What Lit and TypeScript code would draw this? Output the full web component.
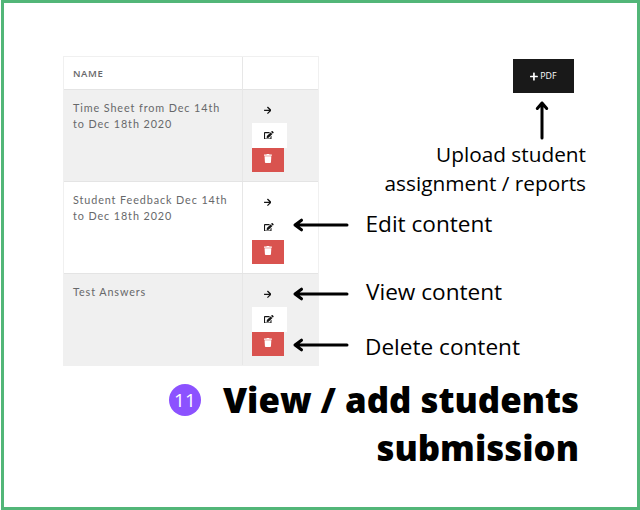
import { LitElement, html, css, svg } from "lit";
import { customElement, property } from "lit/decorators.js";

const ICONS = {
  arrow: {
    w: 448,
    d: "M190.5 66.9l22.2-22.2c9.4-9.4 24.6-9.4 33.9 0L441 239c9.4 9.4 9.4 24.6 0 33.9L246.6 467.3c-9.4 9.4-24.6 9.4-33.9 0l-22.2-22.2c-9.5-9.5-9.3-25 .4-34.3L311.4 296H24c-13.3 0-24-10.7-24-24v-32c0-13.3 10.7-24 24-24h287.4L190.9 101.2c-9.8-9.3-10-24.8-.4-34.3z",
  },
  edit: {
    w: 576,
    d: "M402.6 83.2l90.2 90.2c3.8 3.8 3.8 10 0 13.8L274.4 405.6l-92.8 10.3c-12.4 1.4-22.9-9.1-21.5-21.5l10.3-92.8L388.8 83.2c3.8-3.8 10-3.8 13.8 0zm162-22.9l-48.8-48.8c-15.2-15.2-39.9-15.2-55.2 0l-35.4 35.4c-3.8 3.8-3.8 10 0 13.8l90.2 90.2c3.8 3.8 10 3.8 13.8 0l35.4-35.4c15.2-15.3 15.2-40 0-55.2zM384 346.2V448H64V128h229.8c3.2 0 6.2-1.3 8.5-3.5l40-40c7.6-7.6 2.2-20.5-8.5-20.5H48C21.5 64 0 85.5 0 112v352c0 26.5 21.5 48 48 48h352c26.5 0 48-21.5 48-48V306.2c0-10.7-12.9-16-20.5-8.5l-40 40c-2.2 2.3-3.5 5.3-3.5 8.5z",
  },
  trash: {
    w: 448,
    d: "M432 32H312l-9.4-18.7A24 24 0 0 0 281.1 0H166.8a23.72 23.72 0 0 0-21.4 13.3L136 32H16A16 16 0 0 0 0 48v32a16 16 0 0 0 16 16h416a16 16 0 0 0 16-16V48a16 16 0 0 0-16-16zM53.2 467a48 48 0 0 0 47.9 45h245.8a48 48 0 0 0 47.9-45L416 128H32z",
  },
  plus: {
    w: 448,
    d: "M416 208H272V64c0-17.67-14.33-32-32-32h-32c-17.67 0-32 14.33-32 32v144H32c-17.67 0-32 14.33-32 32v32c0 17.67 14.33 32 32 32h144v144c0 17.67 14.33 32 32 32h32c17.67 0 32-14.33 32-32V304h144c17.67 0 32-14.33 32-32v-32c0-17.67-14.33-32-32-32z",
  },
};

const icon = (name: keyof typeof ICONS) => html`<svg class="icon ${name}" viewBox="0 0 ${ICONS[name].w} 512">
  ${svg`<path d=${ICONS[name].d} fill="currentColor" />`}
</svg>`;

@customElement("submission-table")
export class SubmissionTable extends LitElement {
  @property({ attribute: false }) rows: string[][] = [];

  static styles = css`
    :host {
      display: block;
      flex: none;
      box-sizing: border-box;
      width: 256px;
      border: 1px solid #f0f0f0;
      font-family: Lato, "Open Sans", sans-serif;
      color: #67686a;
    }
    .row {
      display: grid;
      grid-template-columns: 179px 1fr;
      box-sizing: border-box;
      height: 92px;
    }
    .head {
      height: 32px;
      font: 600 9.6px/33px "Open Sans", sans-serif;
      letter-spacing: 0.6px;
    }
    .striped {
      background: #f0f0f0;
    }
    .row + .row {
      border-top: 1px solid #e4e4e4;
    }
    .name {
      padding: 9.5px 0 0 9px;
      font-size: 10.8px;
      line-height: 16.5px;
      letter-spacing: 0.9px;
      border-right: 1px solid #e7e7e7;
      white-space: nowrap;
    }
    .head .name {
      padding-top: 0;
      font: inherit;
      letter-spacing: inherit;
    }
    .line {
      display: block;
    }
    .actions {
      display: flex;
      flex-direction: column;
      padding: 9px 0 0 9px;
    }
    .btn {
      display: flex;
      align-items: center;
      justify-content: center;
      box-sizing: border-box;
      width: 32px;
      height: 24.4px;
      color: #151515;
    }
    .btn.open {
      padding: 0 1px 1px 0;
    }
    .btn.change {
      width: 35px;
      padding: 0 1px 1px 0;
      background: #fff;
    }
    .btn.remove {
      background: #d9534f;
      color: #fff;
    }
    .icon {
      height: 8.6px;
      display: block;
    }
    .remove .icon {
      height: 9px;
      margin-bottom: 2px;
    }
  `;

  render() {
    return html`
      <div class="row head"><div class="name">NAME</div></div>
      ${this.rows.map(
        (lines, i) => html`<div class="row ${i % 2 ? "" : "striped"}">
          <div class="name">${lines.map((l) => html`<span class="line">${l}</span>`)}</div>
          <div class="actions">
            <div class="btn open">${icon("arrow")}</div>
            <div class="btn change">${icon("edit")}</div>
            <div class="btn remove">${icon("trash")}</div>
          </div>
        </div>`
      )}
    `;
  }
}

@customElement("app-root")
export class AppRoot extends LitElement {
  static styles = css`
    :host {
      display: block;
      box-sizing: border-box;
      width: 640px;
      height: 510px;
      padding-left: 1px;
      background: #fff;
      overflow: hidden;
      font-family: "Open Sans", sans-serif;
      color: #000;
    }
    .frame {
      box-sizing: border-box;
      height: 510px;
      border: 3px solid #52b678;
      padding: 53px 0 0 59px;
    }
    .content {
      display: flex;
      height: 310px;
    }
    .notes {
      position: relative;
      display: flex;
      flex-direction: column;
      margin-left: -27px;
      width: 294px;
    }
    .upload {
      display: flex;
      flex-direction: column;
      align-items: flex-end;
      flex: none;
      height: 153.7px;
      padding-top: 3px;
      box-sizing: border-box;
    }
    .pdf {
      display: flex;
      align-items: center;
      justify-content: center;
      gap: 2px;
      width: 61px;
      height: 34px;
      margin-right: 12px;
      background: #191919;
      color: #fff;
      font-size: 8.8px;
    }
    .pdf .icon {
      height: 9px;
    }
    .up {
      display: block;
      width: 14px;
      height: 40px;
      margin: 7px 37px 0 0;
    }
    .caption {
      font-size: 20.8px;
      line-height: 29.2px;
      text-align: right;
      white-space: nowrap;
    }
    .callout {
      display: flex;
      flex: none;
      align-items: center;
      gap: 16px;
      height: 30px;
      font-size: 22.6px;
      line-height: 30px;
      white-space: nowrap;
    }
    .left {
      display: block;
      width: 57px;
      height: 14px;
    }
    .edit .label {
      margin: -1px 0 0 0.5px;
    }
    .view {
      margin-top: 39.7px;
    }
    .view .label {
      margin: -5px 0 0 1px;
    }
    .delete {
      margin-top: 20.6px;
    }
    .delete .label {
      margin-top: 4px;
    }
    .footer {
      display: flex;
      justify-content: flex-end;
      gap: 22px;
      padding: 10px 58px 0 0;
    }
    .badge {
      width: 32px;
      height: 32px;
      margin-top: 8px;
      border-radius: 50%;
      background: #8c52ff;
      color: #fff;
      font-size: 19px;
      line-height: 32px;
      text-align: center;
    }
    .title {
      margin: 0;
      font-size: 34.8px;
      font-weight: 800;
      line-height: 48px;
      text-align: right;
      white-space: nowrap;
    }
    .stroke {
      fill: none;
      stroke: #000;
      stroke-width: 3;
      stroke-linecap: round;
      stroke-linejoin: round;
    }
  `;

  private callout(kind: string, text: string) {
    return html`<div class="callout ${kind}">
      <svg class="left" viewBox="0 0 57 14"><path class="stroke" d="M55 7H3M9.5 2.2L3 7L9.5 11.8" /></svg>
      <span class="label">${text}</span>
    </div>`;
  }

  render() {
    return html`<div class="frame">
      <div class="content">
        <submission-table
          .rows=${[
            ["Time Sheet from Dec 14th", "to Dec 18th 2020"],
            ["Student Feedback Dec 14th", "to Dec 18th 2020"],
            ["Test Answers"],
          ]}
        ></submission-table>
        <div class="notes">
          <div class="upload">
            <div class="pdf">${icon("plus")}<span>PDF</span></div>
            <svg class="up" viewBox="0 0 14 40"><path class="stroke" d="M7 38V3M2.3 8.5L7 3L11.7 8.5" /></svg>
            <div class="caption">Upload student<br />assignment / reports</div>
          </div>
          ${this.callout("edit", "Edit content")}
          ${this.callout("view", "View content")}
          ${this.callout("delete", "Delete content")}
        </div>
      </div>
      <div class="footer">
        <div class="badge">11</div>
        <h1 class="title">View / add students<br />submission</h1>
      </div>
    </div>`;
  }
}
